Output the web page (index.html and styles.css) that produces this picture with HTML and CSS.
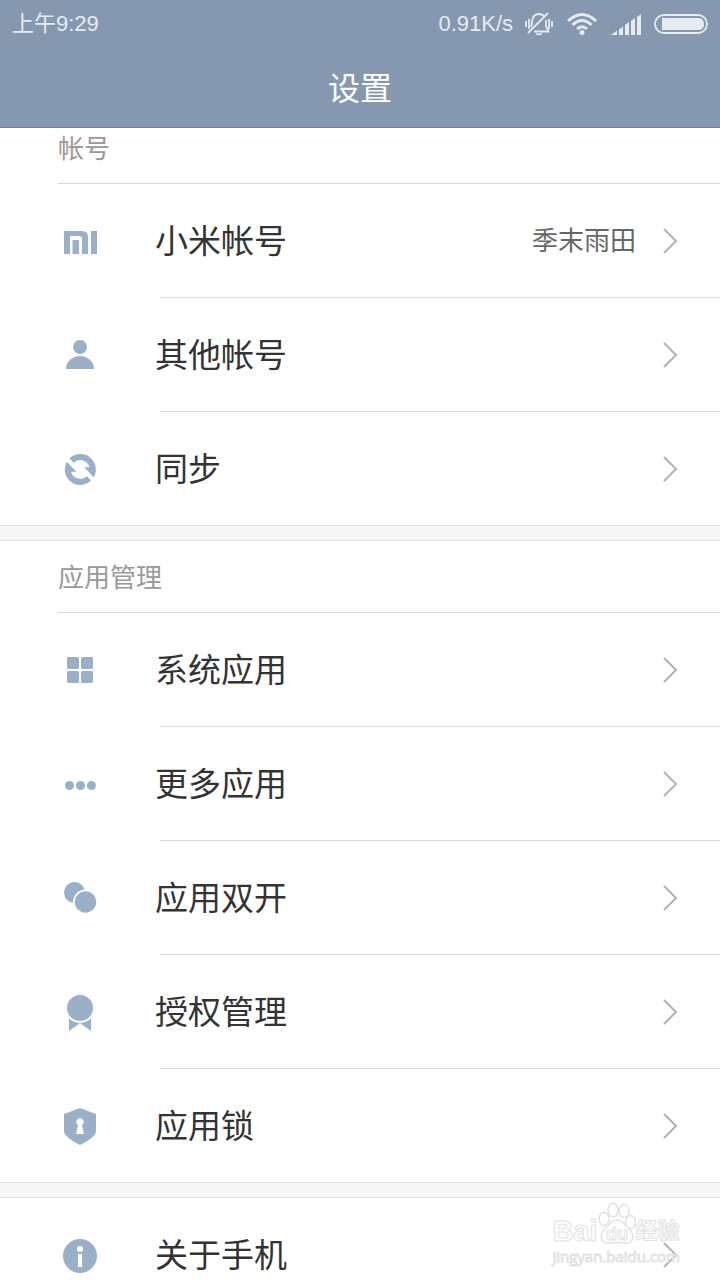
FILE: index.html
```
<!DOCTYPE html>
<html lang="zh-CN">
<head>
    <meta charset="UTF-8">
    <meta name="viewport" content="width=device-width, initial-scale=1.0">
    <title>设置</title>
    <link rel="stylesheet" href="styles.css">
</head>
<body>

    <!-- Status bar and page title -->
    <header class="top">
        <div class="status">
            <span class="time">上午9:29</span>
            <span class="speed">0.91K/s</span>
            <svg class="bell" width="28" height="24" viewBox="0 0 28 24" fill="none" stroke="currentColor" stroke-width="1.8">
                <path d="M6 15Q7 13 7 9Q8 2 14 2Q17 2 19 4M21 8V14L23.500 19.500H9M3 21L23 1"/>
                <path d="M11 22H17Q14 24 11 22Z" fill="currentColor" stroke-width="1"/>
                <path d="M1 9V15M4 7V17M24 7V17M27 9V15"/>
            </svg>
            <svg class="wifi" width="30" height="24" viewBox="0 0 30 24" fill="none" stroke="currentColor" stroke-width="3">
                <path d="M1 9Q15 -4 29 9M5.500 13Q15 4 24.500 13M10 17Q15 12.500 20 17"/>
                <circle cx="15" cy="20.500" r="2.500" fill="currentColor" stroke="none"/>
            </svg>
            <svg class="signal" width="31" height="24" viewBox="0 0 31 24" fill="currentColor">
                <path d="M0 23L6 18.500V23ZM8 17.500L12 14.500V23H8ZM14 13L18 10V23H14ZM20 9L24 6V23H20ZM26 5L30 2V23H26Z"/>
            </svg>
            <svg class="battery" width="54" height="24" viewBox="0 0 54 24" fill="none" stroke="currentColor" stroke-width="1.800">
                <rect x="1" y="3" width="52" height="18" rx="9"/>
                <path d="M8 6H44Q50 6 50 12Q50 18 44 18H8Z" fill="currentColor" stroke="none"/>
            </svg>
        </div>
        <h1>设置</h1>
    </header>

    <main>
        <!-- Accounts -->
        <section class="group scrolled">
            <h2>帐号</h2>
            <ul>
                <li><a class="row" href="#">
                    <svg class="icon" viewBox="0 0 40 41"><path d="M4 11H22Q28 11 28 17V34H22V19Q22 16 19 16H10V34H4ZM12.500 20H19V34H12.500ZM31 11H37V34H31Z"/></svg>
                    <span class="label">小米帐号</span>
                    <span class="value">季末雨田</span>
                    <svg class="arrow" viewBox="0 0 16 26"><path d="M2 1L14 13L2 25"/></svg>
                </a></li>
                <li><a class="row" href="#">
                    <svg class="icon" viewBox="0 0 40 41"><circle cx="20" cy="13" r="7"/><path d="M6 35A14 13 0 0 1 34 35Z"/></svg>
                    <span class="label">其他帐号</span>
                    <svg class="arrow" viewBox="0 0 16 26"><path d="M2 1L14 13L2 25"/></svg>
                </a></li>
                <li><a class="row" href="#">
                    <svg class="icon" viewBox="0 0 40 41">
                        <path id="half" d="M9.500 10.400A15.500 15.500 0 0 1 33.700 29.300L24.300 19.300H29.500A9.500 9.500 0 0 0 13.700 14.700Z"/>
                        <use href="#half" transform="rotate(180 20.300 21.500)"/>
                    </svg>
                    <span class="label">同步</span>
                    <svg class="arrow" viewBox="0 0 16 26"><path d="M2 1L14 13L2 25"/></svg>
                </a></li>
            </ul>
        </section>

        <!-- Apps -->
        <section class="group">
            <h2>应用管理</h2>
            <ul>
                <li><a class="row" href="#">
                    <svg class="icon" viewBox="0 0 40 41">
                        <rect x="7" y="8" width="12" height="12" rx="1.500"/><rect x="21" y="8" width="12" height="12" rx="1.500"/>
                        <rect x="7" y="22" width="12" height="12" rx="1.500"/><rect x="21" y="22" width="12" height="12" rx="1.500"/>
                    </svg>
                    <span class="label">系统应用</span>
                    <svg class="arrow" viewBox="0 0 16 26"><path d="M2 1L14 13L2 25"/></svg>
                </a></li>
                <li><a class="row" href="#">
                    <svg class="icon" viewBox="0 0 40 41"><circle cx="9.500" cy="22.500" r="4.500"/><circle cx="20.500" cy="22.500" r="4.500"/><circle cx="31.500" cy="22.500" r="4.500"/></svg>
                    <span class="label">更多应用</span>
                    <svg class="arrow" viewBox="0 0 16 26"><path d="M2 1L14 13L2 25"/></svg>
                </a></li>
                <li><a class="row" href="#">
                    <svg class="icon" viewBox="0 0 40 41"><circle cx="14.500" cy="15.500" r="10.500"/><circle class="cut" cx="25.500" cy="25" r="12.500"/><circle cx="25.500" cy="25" r="10.700"/></svg>
                    <span class="label">应用双开</span>
                    <svg class="arrow" viewBox="0 0 16 26"><path d="M2 1L14 13L2 25"/></svg>
                </a></li>
                <li><a class="row" href="#">
                    <svg class="icon" viewBox="0 0 40 41"><path d="M9 26H31V40L20 32L9 40Z"/><circle class="cut" cx="20" cy="17" r="15"/><circle cx="20" cy="17" r="13"/></svg>
                    <span class="label">授权管理</span>
                    <svg class="arrow" viewBox="0 0 16 26"><path d="M2 1L14 13L2 25"/></svg>
                </a></li>
                <li><a class="row" href="#">
                    <svg class="icon" viewBox="0 0 40 41">
                        <path d="M20 3L36 9V26Q36 32 20 40Q4 32 4 26V9Z"/>
                        <path class="cut" d="M18 20A3.700 3.700 0 1 1 22 20L24 29H16Z"/>
                    </svg>
                    <span class="label">应用锁</span>
                    <svg class="arrow" viewBox="0 0 16 26"><path d="M2 1L14 13L2 25"/></svg>
                </a></li>
            </ul>
        </section>

        <!-- About -->
        <section class="group">
            <ul>
                <li><a class="row" href="#">
                    <svg class="icon" viewBox="0 0 40 41"><circle cx="20" cy="22" r="17"/><circle class="cut" cx="20" cy="15" r="3"/><path class="cut" d="M18 20H22V33H18Z"/></svg>
                    <span class="label">关于手机</span>
                    <svg class="arrow" viewBox="0 0 16 26"><path d="M2 1L14 13L2 25"/></svg>
                </a></li>
            </ul>
        </section>
    </main>

    <!-- Watermark over the list -->
    <div class="watermark">
        <div class="brand">
            <span>Bai</span>
            <svg width="38" height="42" viewBox="0 0 38 42">
                <ellipse cx="6" cy="17" rx="5" ry="6.500"/><ellipse cx="15" cy="8" rx="5" ry="7"/>
                <ellipse cx="26" cy="9" rx="5" ry="6.500"/><ellipse cx="32.500" cy="20" rx="5" ry="6.500"/>
                <path d="M19 18Q24 18 27 23Q35 29 35 35Q34 42 26 41Q19 40 12 41Q4 42 3 35Q3 29 10 24Q14 18 19 18Z"/>
                <text x="19" y="38" text-anchor="middle">du</text>
            </svg>
            <span class="cn">经验</span>
        </div>
        <div class="site">jingyan.baidu.com</div>
    </div>

</body>
</html>
```
FILE: styles.css
```
/* General styles */
* {
    box-sizing: border-box;
}
body {
    margin: 0;
    height: 100vh;
    overflow: hidden;
    position: relative;
    background-color: #fff;
    color: #333;
    font-family: "Noto Sans CJK SC", sans-serif;
}
ul {
    list-style: none;
    margin: 0;
    padding: 0;
}

/* Header */
.top {
    height: 128px;
    background-color: #8598b0;
    border-bottom: 1px solid #6d809a;
    color: #fff;
}
.status {
    display: flex;
    align-items: center;
    height: 48px;
    padding: 0 12px;
    color: #e6ebf0;
    font-family: "Liberation Sans", "Noto Sans CJK SC", sans-serif;
    font-size: 22px;
    line-height: 24px;
}
.speed {
    margin-left: auto;
}
.bell,
.battery {
    margin-left: 12px;
}
.wifi,
.signal {
    margin-left: 14px;
}
h1 {
    margin: 0;
    font-size: 32px;
    font-weight: 400;
    line-height: 76px;
    text-align: center;
}

/* Groups of settings */
.group + .group::before {
    content: "";
    display: block;
    height: 14px;
    background-color: #f7f7f7;
    border-top: 1px solid #e0e0e0;
    border-bottom: 1px solid #e0e0e0;
}
h2 {
    margin: 0 0 0 58px;
    padding-bottom: 2px;
    border-bottom: 1px solid #d9d9d9;
    color: #999;
    font-size: 26px;
    font-weight: 400;
    line-height: 69px;
}
.scrolled h2 {
    padding-bottom: 18px;
    line-height: 37px;
}
li + li::before {
    content: "";
    display: block;
    height: 1px;
    margin-left: 160px;
    background-color: #d9d9d9;
}
.row {
    display: flex;
    align-items: center;
    height: 113px;
    padding: 0 42px 0 60px;
    color: #333;
    text-decoration: none;
}
.icon {
    width: 40px;
    height: 41px;
    margin-right: 55px;
    fill: #9ab0c8;
}
.icon .cut {
    fill: #fff;
}
.label,
.value {
    padding-bottom: 4px;
}
.label {
    flex: 1;
    font-size: 33px;
}
.value {
    margin-right: 26px;
    color: #666;
    font-size: 26px;
}
.arrow {
    width: 16px;
    height: 26px;
    fill: none;
    stroke: #b3b3b3;
    stroke-width: 2;
}

/* Watermark */
.watermark {
    position: absolute;
    right: 40px;
    bottom: 16px;
    color: rgba(255, 255, 255, 0.7);
    font-family: "Liberation Sans", "Noto Sans CJK SC", sans-serif;
    -webkit-text-stroke: 1px #e2e2e2;
}
.brand {
    display: flex;
    align-items: flex-end;
    margin-bottom: 4px;
    font-size: 29px;
    font-weight: 700;
    line-height: 26px;
}
.brand svg {
    fill: #fff;
    stroke: #e2e2e2;
    stroke-width: 1.5;
}
.brand text {
    font-size: 18px;
    stroke-width: 1;
}
.brand .cn {
    font-size: 22px;
}
.site {
    font-family: "Open Sans", sans-serif;
    font-size: 15px;
    line-height: 16px;
}
```
